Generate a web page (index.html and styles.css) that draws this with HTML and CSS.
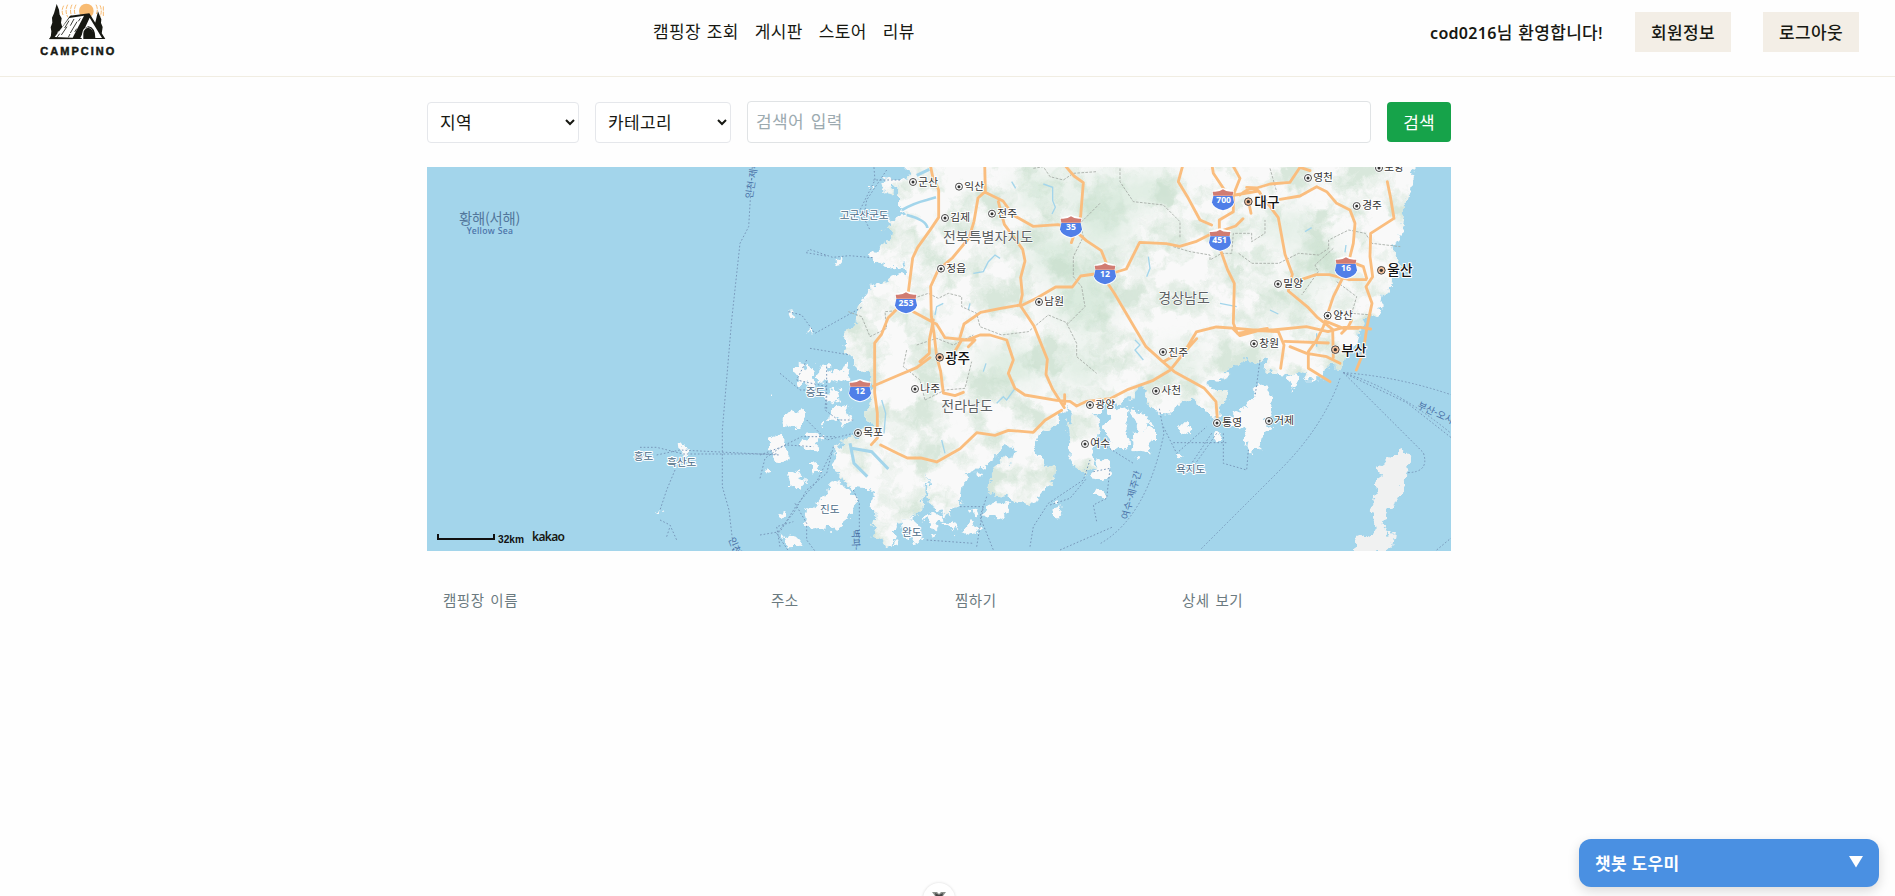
FILE: index.html
```html
<!DOCTYPE html>
<html lang="ko">
<head>
<meta charset="utf-8">
<title>CAMPCINO</title>
<link rel="stylesheet" href="styles.css">
</head>
<body>
<header class="header">
  <a class="logo" aria-label="CAMPCINO">
    <svg width="76" height="56" viewBox="0 0 228 168">
      <circle cx="139" cy="33" r="22" fill="#f8bb72"/>
      <g fill="none" stroke="#f8bb72" stroke-width="3" stroke-dasharray="13 3">
        <path d="M108 14Q99 31 107 47M96 14Q87 32 96 50M83 14Q73 34 84 52M71 17Q63 31 69 45M168 14Q176 29 168 44M180 16Q187 30 181 50M190 19V50"/>
      </g>
      <path fill="#171812" d="M50 12l7 17 2 15 6 11-2 13 4 14-8 14-5-2-5 19-17 1 2-20-2-12 5-14-1-15 6-13zM174 34l6 15 4 9-1 11 5 12-3 20-14-8-8-16 4-14zM32 109h15l43-62 58-7 48 77h-36l-2-18q-1-16-16-17-14 2-15 18l-2 17H28z"/>
      <path fill="#fff" d="M44 111L88 54l44-7-34 66z"/>
      <path fill="#fff" d="M121 114l28-61 37 61h-20q0-32-21-35-16 3-17 35z"/>
      <path fill="#171812" d="M130 117q-3-34 15-34 17 2 17 34z"/>
      <g stroke="#171812" stroke-width="2.500" fill="none"><path d="M74 84l13-22M64 105l17-25M91 99l20-34M85 112l5-10M104 96l6-10M102 57l-11 20M51 112l8-11M121 55l-6 9M28 116h70"/></g>
      <text x="1" y="164" class="logo-text" textLength="222">CAMPCINO</text>
    </svg>
  </a>
  <nav class="nav"><a>캠핑장 조회</a><a>게시판</a><a>스토어</a><a>리뷰</a></nav>
  <div class="user"><span class="welcome"><b>cod0216</b>님 환영합니다!</span><button class="user-btn">회원정보</button><button class="user-btn">로그아웃</button></div>
</header>
<main class="container">
  <form class="search">
    <select class="select region"><option>지역</option></select>
    <select class="select category"><option>카테고리</option></select>
    <input class="keyword" placeholder="검색어 입력">
    <button class="submit" type="button">검색</button>
  </form>
  <svg class="map" width="1024" height="384" viewBox="427 167 1024 384">
    <defs>
      <filter id="rough" x="-5%" y="-5%" width="110%" height="110%" color-interpolation-filters="sRGB"><feTurbulence type="fractalNoise" baseFrequency=".032" numOctaves="4" seed="4"/><feDisplacementMap in="SourceGraphic" scale="48" xChannelSelector="R" yChannelSelector="G"/></filter>
      <filter id="relief" x="0" y="0" width="100%" height="100%" color-interpolation-filters="sRGB"><feTurbulence type="fractalNoise" baseFrequency=".011" numOctaves="6" seed="8"/><feColorMatrix values="0 0 0 0 .76  0 0 0 0 .86  0 0 0 0 .78  3.4 0 0 0 -1.45"/><feComposite in2="SourceGraphic" operator="in"/></filter>
      <filter id="soft" x="-60%" y="-60%" width="220%" height="220%"><feGaussianBlur stdDeviation="36"/></filter>
      <clipPath id="mainland"><use href="#coast"/></clipPath>
      <g id="city"><circle r="14" fill="#fff"/><circle r="10.5" fill="#fff" stroke="#444" stroke-width="3"/><circle r="4.5" fill="#333"/></g>
      <g id="metro"><circle r="14" fill="#fff"/><circle r="11.5" fill="#f5c09a" stroke="#444" stroke-width="3"/><circle r="5" fill="#333"/></g>
      <g id="shield"><path d="M-33-27L0-36 33-27 30-12 35 8Q31 27 0 34-31 27-35 8L-30-12z" fill="#fff"/><path d="M-31-25Q-10-23 0-32 10-23 31-25L29-13H-29z" fill="#d17c72"/><path d="M-29-12H29L33 7Q29 25 0 31-29 25-33 7z" fill="#507fe8"/></g>
    </defs>
    <rect x="427" y="167" width="1024" height="384" fill="#a3d5eb"/>
    <g transform="translate(760 160) scale(.33333)">
      <g filter="url(#rough)" fill="#f9f9f9">
        <path id="coast" d="M440 0V42L455 48 366 65 375 100 400 107 402 80 415 85 414 132 432 145 425 155 435 165 400 175 396 195 372 205 397 235 365 255 335 282 340 305 380 318 430 313 444 328 438 347 405 345 370 360 335 382 318 405 305 440 294 475 275 512 250 532 248 556 275 572 280 603 292 625 330 640 334 680 322 735 322 775 333 795 300 812 278 830 235 850 220 880 228 920 246 960 275 983 320 988 344 1000 330 1030 346 1060 344 1090 332 1106 350 1145 380 1160 402 1142 412 1090 450 1080 472 1058 490 1040 496 1000 500 942 506 1010 512 1040 545 1065 575 1058 602 1035 610 980 620 945 650 935 700 898 738 860 762 868 754 905 725 900 695 950 682 985 690 1005 730 1010 770 1020 800 1035 835 1020 850 980 885 965 887 940 868 920 845 895 822 860 830 830 870 805 910 760 918 740 935 765 918 810 925 850 922 890 945 920 975 940 1000 925 1005 895 992 860 1012 830 1020 795 1000 760 1045 735 1085 712 1110 720 1145 685 1166 695 1160 735 1185 750 1230 755 1248 730 1290 725 1330 750 1350 775 1382 770 1380 745 1405 715 1395 690 1362 690 1350 670 1405 650 1385 630 1430 620 1455 596 1500 610 1525 595 1520 620 1540 640 1570 640 1615 645 1645 655 1685 655 1700 620 1740 625 1755 605 1758 580 1796 550 1805 500 1835 475 1870 440 1875 395 1905 370 1900 345 1930 325 1920 290 1900 270 1915 230 1930 160 1950 90 1970 0z"/>
        <path d="M180 620l25-5 15 25 35-20 15 30-25 20-25-10-15 22-30-25zM105 635l35-25 25 30-10 30-35 3zM75 770l20-20 35-5 8 35-25 25-40-10zM200 700l25-18 25 12-10 30-30 5zM215 745l45-8 15 40-20 25-25-15-20-12zM28 836l35-15 20 12-10 30 15 30-28 20-25-25zM120 835l40-10 22 20-20 20-35-5zM145 910l30-5 12 30-24 12zM80 940l30-15 28 45-20 20-30-15zM215 960l20 5 35 25 18 40-20 45-35 30-45 5-35 5-25-25 10-35 50-30 20-40zM428 1085l30-5 25 12 15 45-20 22-40-25zM490 1070l45-8 20 15-40 25zM550 1090l30-10 15 20-15 20zM595 1110l35-20 40 18-30 22zM675 1050l30-20 42 0-5 35-30 10-35-8zM870 1040l30-10 8 25-18 20zM505 1130l25-5 0 20zM1000 1000l25-15 25 25-20 15zM65 1120l40 10 25 30-55 2zM1045 770l25-40 45 18-5 55-10 20 5 40-15 10-30-10-10-35-15-20zM1135 805l50 5 0 30-12 40-45-5-15-30zM1120 755l20-10 10 20 30 35-45 10zM1475 700l25-30 20 5-2 25 25 5-5 45-12 25 10 30-25 15-12 45-25 20-15-20 5-40-25-20-18-30 20-30 25-5zM1358 820l25-5 10 25-18 7zM1400 770l35-20 20 12-10 25-30 10zM1582 650l20-8 5 20-10 30zM1250 790l25 0 20 25-22 8zM1245 882l15 0 5 10-12 5zM1020 890l25 10 5 45-35 15-20-25zM-235 845l20 20 5 30-22-12zM10 935l20-10 5 10-20 6zM218 312l20-22 12 5-20 25zM-304 1050l8 15-12-5zM85 460l15-3 5 20-12 2zM155 510l12 0 0 10-12 0zM30 690l8 8-8 4zM330 80l10 8-10 4zM190 780l12 10-12 12zM60 1060l20 10-15 15zM395 1150l20-5 0 15zM630 1050l20-5 5 20-15 8zM1130 890l12 4-8 10z"/>
        <g clip-path="url(#mainland)">
          <g filter="url(#soft)" fill="#c3e0ca" opacity=".6"><ellipse cx="850" cy="90" rx="80" ry="50"/><ellipse cx="1030" cy="160" rx="80" ry="110"/><ellipse cx="970" cy="420" rx="90" ry="95"/><ellipse cx="880" cy="280" rx="75" ry="60"/><ellipse cx="1670" cy="300" rx="60" ry="60"/><ellipse cx="750" cy="620" rx="100" ry="50"/><ellipse cx="960" cy="620" rx="60" ry="50"/><ellipse cx="1260" cy="610" rx="65" ry="35"/><ellipse cx="1170" cy="90" rx="80" ry="45"/><ellipse cx="1570" cy="200" rx="80" ry="35"/><ellipse cx="1610" cy="430" rx="50" ry="40"/></g>
          <rect x="200" y="0" width="1800" height="1180" filter="url(#relief)" opacity=".6"/>
        </g>
      </g>
      <path filter="url(#rough)" fill="#f0f1f1" d="M1905 885l20-5 12-2 10 12 6 35-22 35-15 50-25 40-20 45 15 30 22-8-5 35-20 15-18 16h-75l5-45 35-15 13-25-8-60 18-45-10-15 20-60z"/>
      <g class="water"><path d="M426 150Q460 130 500 120L528 112M440 165Q500 180 502 204" stroke-width="8"/><path d="M470 46L508 28M270 850l12 60 40 40M275 865l60 10 50 52" stroke-width="9"/><path d="M850 72l28 10 0 40 8 20-10 20M640 340l30-5 15-30 20-20 15 10M710 730l20-20 10 10 25-35M525 465l5-25 20-10M625 450l5-20M545 840l10 40M1165 290l5 35-10 25M1125 540l15 15-15 15 25 30M1380 430l50 10M1530 450l25 12M1670 520l0 40M1758 255l-3 22M1635 215l20-12M755 65l12 20M365 720l12 40-5 60M670 635l8-25" stroke-width="4"/></g>
      <path class="border" d="M820 25l30-5 20 30 40 10 30-20 70-5M1020 130l-60 60 10 40-30 60 0 60 25 30 10 60-50 50-60-25-60 50-80 10-65-25-10-40-45-20 0-30-40-10-30 15-30-15-60 20-10 30-60 5 5 50-50 25-25-60-40-15M920 490l30 60 0 40 60 50M470 555l60-20 50 20 60-30M440 570l-10 50 50 40 15 60M495 720l60-30 60-5 20-80M1080 25l0 40 40 60 90 10 50 50 0 50M1240 260l50 15 60 10 0 15 35-20 30 0 5-60 55 0 0 25 40-25 0-40M1436 280l40 30 80 0 60-30 60 5 30-20 0-25 60-30 50 10 20 30 85 10M1720 265l-55 50 10 20-50 70M1730 365l60 45-15 50 60 5M1530 25l20 70"/>
      <g class="ferry"><path d="M-22 0l-12 200-26 50-25 230-28 330 0 170 20 70 15 130M340 0l5 60-45 90 30 60M380 30l-60 90-10 60M420 60h-80M338 293l-70-6-50 5-70-24-10 10 60 10M85 455l40 10 40 55 140-78M150 565l120 20M-360 862l50 0 80 20 280 0M-310 885l70-15 300 15M-255 930l-25 60-20 60M-300 1080l30 15 20 45M-280 1130l10-30M0 955l15-60 50-35 60-30 100 0M0 885l80-30 80 5M0 1125l60-10 50-80 60-70 45-90M280 990l18 40 0 130M105 1030l35 60 0 50 30 40M220 860l-20 80-60 50-40 70-50 60 40 60M600 1040l70 0-20 120M680 1010l-20 60 40 100M810 1160l10-60 45-70 105-70 20-60M870 1035l60-20 50-60M500 1140l140 10M900 1170l160-70M1000 935l50-10-10 90-40 20 10 50"/><path d="M1022 1150Q1160 1070 1212 820L1198 745M1040 860l80 50M1210 800l40 80 90-80M1240 848h160M1355 820l-60 90M1370 820l-70 100M1390 820l0 90 70 20 5-60M1500 600l-15 110M1740 655Q1690 800 1560 930T1320 1170M1750 638Q1920 650 2090 710M1750 638Q1920 690 2085 830M1750 638l190 90 140 110M1750 638l120 120 120 120q20 60-50 60M2030 1170l60-50M140 600l-30 60 90 20-5 70 40 30 50 0M60 1160l-10-60 50-15M60 640l60 50 60 0M200 620l0 130M140 780l60 60 80-20"/></g>
      <g id="roads" class="road">
        <path d="M510 10l8 40 18 40 0 82-27 40-36 50-15 32-14 110-30 40-30 30-20 50-20 25 0 150 8 60 0 75-18 20M674 10l2 84-22 20-12 70-15 50-50 60-42 35-23 50 2 90 8 50 8 70 12 45 8 65 35 8 25-10M674 96l55 27 30 42 60 34 75-5 40 8 45 40 45 30 14 35M715 125l18 68 55 75 7 35-13 50 5 50-7 32-58 10-60 12-50 35-12 40M918 20l24 28 28 20-8 100-28 80M782 438l50-25 55-32 50 0 25-33 42-6 45 0 50-15 40-80 80 4 40 8 48-14 40-20 80-27 22-22M460 455l70 38 25 40 65 7 40-15 30 0 50 15 20 60-15 40 20 45 30 20 95 16 40 3 20 14 30-14 70-8 55-28 75-27 50-30 40-50 40-45M782 438l40 60 20 50 20 50-4 45 20 45 35 55M914 704v28M340 678l70-30 60-25 40-30M520 480l-12 60 0 40-28 25M575 590l30-50 40 0-20 20M362 855l50 25 30 14 40 0 48 12 70-40 50-48 55 8 40-15 75 6 35-36 50-30M1043 370l20 30 65 110 30 50 50 45 35 30 90 50 35 40 5 65M1209 606l70-40 30-50 60-15 60 4 50 5 60 0 100-10 65 15 48-13 50 0 30 5M1270 10l-15 55 30 50 35 65 35 15M1355 10l5 30 40 60M1415 10l25 45-20 50 0 50-42 25 0 80 25 70 20 40-3 120 12 30 90-15M1425 105l70-12 60 80 20 110 22 60-12 50 60 50 28 30 45 35 2 85M1460 82l30 2 40-12 60-5 30-45 30 10M1560 118l60-10 50-28 30 15 30 35 40 20 15 40-5 60-20 80-40 80-30 90-20 40-25 35 0 50 65 40M1608 364l60-20 40 0 60 15 50 0M1882 65l10 50 10 60-70 45-2 70 8 60-20 30 18 50-15 70-12 80-20 50M1420 507l20 20 55-15 60 3 17 40-10 70M1575 544l130 5M1590 560l50 20 60 10 40 20M1700 485l50 20 45 0M1745 520l20-20 10-20M1465 120l8 40M1440 105q40-35 60-7M1785 310l25 10 10 35"/>
      </g>
      <g class="labels">
        <use href="#city" x="459" y="66"/><text x="475" y="77">군산</text><use href="#city" x="597" y="80"/><text x="613" y="90">익산</text><use href="#city" x="555" y="174"/><text x="571" y="184">김제</text><use href="#city" x="696" y="161"/><text x="712" y="172">전주</text><use href="#city" x="543" y="326"/><text x="559" y="336">정읍</text><use href="#city" x="837" y="426"/><text x="853" y="436">남원</text><use href="#city" x="1644" y="54"/><text x="1660" y="64">영천</text><use href="#city" x="1790" y="138"/><text x="1807" y="148">경주</text><use href="#city" x="1554" y="372"/><text x="1570" y="382">밀양</text><use href="#city" x="1703" y="467"/><text x="1720" y="477">양산</text><use href="#city" x="1482" y="551"/><text x="1498" y="561">창원</text><use href="#city" x="1209" y="576"/><text x="1225" y="587">진주</text><use href="#city" x="1857" y="24"/><text x="1873" y="33">포항</text><use href="#city" x="465" y="687"/><text x="481" y="697">나주</text><use href="#city" x="294" y="819"/><text x="310" y="829">목포</text><use href="#city" x="990" y="735"/><text x="1006" y="745">광양</text><use href="#city" x="975" y="852"/><text x="991" y="862">여수</text><use href="#city" x="1188" y="693"/><text x="1204" y="703">사천</text><use href="#city" x="1371" y="789"/><text x="1387" y="799">통영</text><use href="#city" x="1527" y="783"/><text x="1543" y="793">거제</text>
      </g>
      <g class="labels metro"><use href="#metro" x="539" y="592"/><text x="555" y="608">광주</text><use href="#metro" x="1465" y="125"/><text x="1483" y="140">대구</text><use href="#metro" x="1864" y="331"/><text x="1882" y="346">울산</text><use href="#metro" x="1726" y="569"/><text x="1744" y="584">부산</text></g>
      <g class="labels province"><text x="549" y="247">전북특별자치도</text><text x="1195" y="430">경상남도</text><text x="544" y="754">전라남도</text></g>
      <g class="labels island"><text x="239" y="176">고군산군도</text><text x="137" y="709">증도</text><text x="180" y="1059">진도</text><text x="426" y="1128">완도</text><text x="1248" y="939">욕지도</text><text x="-379" y="900">홍도</text><text x="-279" y="918">흑산도</text></g>
      <g class="sea"><text x="-903" y="192" class="sea-name" textLength="184">황해(서해)</text><text x="-880" y="221" textLength="139">Yellow Sea</text><text transform="translate(-23 117) rotate(-81)">인천-제주</text><text transform="translate(-95 1137) rotate(68)">인천-제주</text><text transform="translate(276 1108) rotate(88)">벽파-제주</text><text transform="translate(1103 1080) rotate(-74)" textLength="150">여수-제주간</text><text transform="translate(1970 743) rotate(25)">부산-오사카</text></g>
      <g class="shields"><use href="#shield" x="933" y="201"/><text x="933" y="211">35</text><use href="#shield" x="1035" y="342"/><text x="1035" y="352">12</text><use href="#shield" x="438" y="429"/><text x="438" y="439">253</text><use href="#shield" x="1389" y="120"/><text x="1391" y="130">700</text><use href="#shield" x="1380" y="241"/><text x="1379" y="250">451</text><use href="#shield" x="1758" y="324"/><text x="1758" y="332">16</text><use href="#shield" x="300" y="693"/><text x="300" y="701">12</text></g>
    </g>
    <path d="M438 534v5h56v-5" fill="none" stroke="#111" stroke-width="2"/>
    <text class="scale" x="498" y="543" textLength="26" lengthAdjust="spacingAndGlyphs">32km</text>
    <text class="kakao" x="532" y="541" textLength="33">kakao</text>
  </svg>
  <div class="list-head"><span>캠핑장 이름</span><span>주소</span><span>찜하기</span><span>상세 보기</span></div>
</main>
<div class="loader"><svg width="14" height="14" viewBox="0 0 14 14"><path d="M0 0h5l2 2 2-2h5l-3 4v7H3V4z" fill="#8b918c"/><path d="M3 1l4 2 4-2-2 9H5z" fill="#444"/></svg></div>
<div class="chat"><span>챗봇 도우미</span><svg width="14" height="12" viewBox="0 0 14 12"><path d="M0 0h14L7 11.500z" fill="#fff"/></svg></div>
</body>
</html>
```
FILE: styles.css
```css
* { box-sizing: border-box; }
body {
  margin: 0;
  height: 896px;
  overflow: hidden;
  position: relative;
  background: #fefefe;
  color: #171812;
  font-family: "Noto Sans", "Noto Sans CJK KR", sans-serif;
  font-size: 16px;
}
button, input, select { font: inherit; color: inherit; }
.header {
  height: 77px;
  border-bottom: 1px solid #f1ede2;
  display: grid;
  grid-template-columns: 613px 1fr auto;
  align-items: start;
  padding: 0 36px 0 40px;
}
.logo { display: block; height: 56px; }
.logo-text { font: 700 33px "Liberation Sans", sans-serif; fill: #171812; stroke: #171812; stroke-width: 1.5px; }
.nav {
  display: flex;
  gap: 16px;
  padding-top: 20px;
  line-height: 24px;
  font-size: 17px;
  letter-spacing: .36px;
  word-spacing: 1px;
}
.user { display: flex; align-items: center; gap: 32px; padding-top: 12px; }
.welcome { font-size: 17px; font-weight: 500; letter-spacing: .3px; word-spacing: 1px; position: relative; top: -1px; }
.welcome b { font-size: 16px; font-weight: 600; }
.user-btn {
  width: 96px;
  height: 40px;
  padding: 0 0 2px;
  border: 0;
  background: #f3eee6;
  font-size: 17px;
  font-weight: 500;
  letter-spacing: .3px;
}
.container { width: 1024px; margin-left: 427px; }
.search { display: flex; align-items: center; gap: 16px; padding-top: 24px; height: 66px; }
.select {
  height: 41px;
  padding: 0 8px;
  border: 1px solid #e5e7eb;
  border-radius: 4px;
  background: #fff;
  font-size: 17px;
  letter-spacing: .36px;
}
.region { width: 152px; }
.category { width: 136px; }
.keyword {
  width: 624px;
  height: 42px;
  padding: 0 8px 1px;
  border: 1px solid #e0e3e5;
  border-radius: 4px;
  background: #fff;
  font-size: 17px;
  letter-spacing: .36px;
  word-spacing: 2px;
}
.keyword::placeholder { color: #9caab0; }
.submit {
  width: 64px;
  height: 40px;
  padding: 0 0 2px;
  border: 0;
  border-radius: 4px;
  background: #16a34a;
  color: #fff;
  font-size: 17px;
}
.map { display: block; margin-top: 24px; }
.water { fill: none; stroke: #a3d5eb; }
.border { fill: none; stroke: #a4aaa3; stroke-width: 2.5; stroke-dasharray: 8 4; }
.ferry { fill: none; stroke: #7798ba; stroke-width: 3; stroke-dasharray: 5 6; stroke-linejoin: round; }
.road { fill: none; stroke: #fabd7e; stroke-width: 8.5; stroke-linejoin: round; stroke-linecap: round; }
.labels, .sea { font-family: "Noto Sans CJK KR", sans-serif; font-size: 32px; }
.labels text { fill: #333; stroke: #fff; stroke-width: 6px; paint-order: stroke; stroke-linejoin: round; }
.metro { font-size: 41px; font-weight: 500; }
.metro text { fill: #111; }
.province { font-size: 42px; }
.province text { fill: #5d6264; stroke-width: 4px; }
.island text { fill: #4c6c88; }
.sea { fill: #4a72a8; font-size: 29px; }
.sea text:nth-child(2) { font-family: "Noto Sans", sans-serif; font-size: 26px; font-weight: 500; }
.sea .sea-name { font-size: 43px; fill: #52779b; }
.shields { font: 700 26px "Noto Sans", sans-serif; fill: #fff; text-anchor: middle; }
.scale { font: 700 10px "Liberation Sans", sans-serif; fill: #111; }
.kakao { font: 600 12px "Noto Sans", sans-serif; fill: #171812; }
.list-head {
  display: grid;
  grid-template-columns: 328px 184px 227px 1fr;
  padding: 38px 0 0 16px;
  line-height: 22px;
  color: #6b7a80;
  font-size: 14.5px;
  letter-spacing: .5px;
  word-spacing: 1.5px;
}
.loader {
  position: absolute;
  left: 923px;
  top: 883px;
  width: 32px;
  height: 32px;
  border-radius: 50%;
  background: #fff;
  box-shadow: 0 0 3px rgba(0, 0, 0, .15);
  padding: 9px;
}
.loader svg { display: block; }
.chat {
  position: absolute;
  left: 1579px;
  top: 839px;
  width: 300px;
  height: 48px;
  border-radius: 12px;
  padding: 0 16px 2px;
  display: flex;
  align-items: center;
  justify-content: space-between;
  background: #4a90e2;
  color: #fff;
  font-weight: 700;
  font-size: 17px;
  letter-spacing: .3px;
  box-shadow: 0 4px 12px rgba(0, 0, 0, .15);
}
```
